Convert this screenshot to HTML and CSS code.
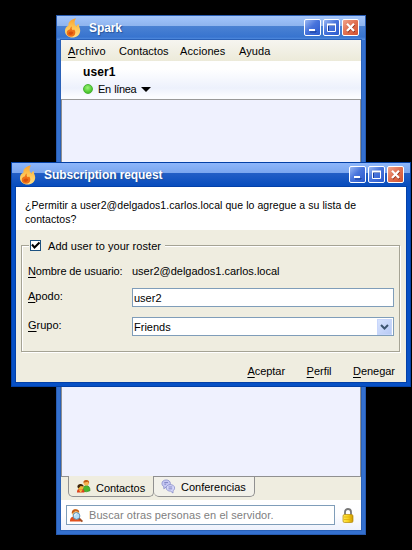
FILE: index.html
```html
<!DOCTYPE html>
<html lang="es">
<head>
<meta charset="utf-8">
<title>Spark</title>
<link rel="stylesheet" href="styles.css">
</head>
<body>
<svg width="0" height="0" class="defs">
  <defs>
    <linearGradient id="fl" x1="0" y1="0" x2="0" y2="1"><stop offset="0" stop-color="#f9a030"/><stop offset=".4" stop-color="#fdc04e"/><stop offset="1" stop-color="#ffe184"/></linearGradient>
    <linearGradient id="gold" x1="0" x2="1"><stop offset="0" stop-color="#ffe95a"/><stop offset=".5" stop-color="#f7d21c"/><stop offset="1" stop-color="#c99500"/></linearGradient>
    <symbol id="flame" viewBox="0 0 16 20">
      <path d="M11.500.3C6 1.500 3.300 4.500 4 7.500C1.500 8.700.5 10.700.5 13C.5 17 4 19.500 8 19.500S15.700 17 15.700 12.500C15.700 10 14 8.500 14.300 6C12.800 6.500 12 7.500 11.800 8.500C9.500 6.500 9.500 3.500 11.500.3Z" fill="url(#fl)"/>
      <path d="M7.500 8.500C6 9.200 5.500 10 5.700 11.300C3.500 11.800 2.200 13 2.200 15C2.200 17.500 4.200 18.700 6.500 18.700S10.800 17.300 10.800 14.700C10.800 13 10.300 12 9.500 11.500L8.400 12.300C7 11.200 6.800 9.800 7.500 8.500Z" fill="#ee7018"/>
      <path d="M3.800 15.500C4.500 13.300 7 12.800 8.800 14.500C8 17.200 5 17.700 3.800 15.500Z" fill="#d9500c"/>
    </symbol>
    <symbol id="min" viewBox="0 0 17 17"><path d="M6 13h6v-1" stroke="#173a94" fill="none"/><path d="M5 11h6" stroke="#fff" stroke-width="2"/></symbol>
    <symbol id="max" viewBox="0 0 17 17"><path d="M5.500 6.500h7v6h-7z" fill="none" stroke="#173a94"/><path d="M4.500 5.500h8v7h-8z" fill="none" stroke="#fff"/><path d="M4 5.500h9" stroke="#fff" stroke-width="2"/></symbol>
    <symbol id="close" viewBox="0 0 17 17"><path d="M5.500 5.500l7 7.500M12.500 5.500l-7 7.500" stroke="#8d2f1b" stroke-width="2"/><path d="M5 4.700l7 7.300M12 4.700l-7 7.300" stroke="#fff" stroke-width="2.200"/></symbol>
  </defs>
</svg>

<main class="window spark">
  <header class="titlebar">
    <svg class="flame"><use href="#flame"/></svg>
    <h1 class="title">Spark</h1>
    <button class="wbtn"><svg><use href="#min"/></svg></button>
    <button class="wbtn"><svg><use href="#max"/></svg></button>
    <button class="wbtn wclose"><svg><use href="#close"/></svg></button>
  </header>
  <div class="content">
    <nav class="menu"><span class="m1"><u>A</u>rchivo</span><span class="m2">Contactos</span><span class="m3">Acciones</span><span class="m4">Ayuda</span></nav>
    <section class="profile">
      <div class="name">user1</div>
      <div class="status"><i class="dot"></i><span>En línea</span><svg class="arrow" viewBox="0 0 10 5"><path d="M0 0h10L5 5z"/></svg></div>
    </section>
    <section class="list"></section>
    <div class="tabs">
      <div class="tab active">
        <svg class="ticon" viewBox="0 0 16 16">
          <path d="M7.500 13C7 9.500 8.500 7 11 7s4 2 4 5.500q-4 2-7.500.5Z" fill="#48b52c" stroke="#2c821b" stroke-width=".6"/>
          <circle cx="11" cy="4" r="3" fill="#f6b653"/><path d="M8 4C7.500 0 14.500 0 14 4.500L12.500 3Z" fill="#c05a14"/>
          <path d="M1 14.500C1 11.500 2 10.500 5 10.500S9 12 9 14.500Z" fill="#dc421c"/>
          <circle cx="5" cy="8.500" r="3" fill="#efb737"/><path d="M1.500 8.500C1 4.500 8 4 8.300 8L5 7.500 2.500 10Z" fill="#3d260b"/><path d="M3 12l2 2 2-2" fill="#f9d447"/>
        </svg><span>Contactos</span>
      </div>
      <div class="tab">
        <svg class="ticon" viewBox="0 0 16 16">
          <path d="M5.500 1C8 1 10 2.500 10 4.800S8 8.500 5.500 8.500L3 10.500V8C1.500 7.300 1 6 1 4.800 1 2.500 3 1 5.500 1Z" fill="#c6c8f2" stroke="#8287c8" stroke-width=".8"/>
          <path d="M10 6c2.500 0 4.500 1.400 4.500 3.500 0 1.500-.7 2.400-1.700 3V15l-2.500-2C7.500 13 5.500 11.500 5.500 9.500S7.500 6 10 6Z" fill="#d6d8fa" stroke="#8287c8" stroke-width=".8"/>
          <path d="M3.500 3.800h4M3.500 5.500h2M8 8.500h4M8 10.500h4" stroke="#7479bd" stroke-width=".9"/>
        </svg><span>Conferencias</span>
      </div>
    </div>
    <div class="search">
      <div class="sfield">
        <svg class="sicon" viewBox="0 0 16 16">
          <path d="M1 14.500C1 10 3 9 6.500 9s6 1.500 6 5.500Z" fill="#e2501e"/>
          <circle cx="7" cy="5" r="3.800" fill="#f8bd68"/><path d="M3 6C2 0 11 0 11 4.500L7 3Z" fill="#c35a18"/>
          <path d="M10.500 11l3.800 3.500" stroke="#a34c22" stroke-width="2"/>
          <circle cx="8" cy="8.500" r="3.600" fill="#b5e0fa" stroke="#5887ad" stroke-width="1"/><path d="M6 8a2 2 0 0 1 2-2" stroke="#fff" fill="none"/>
        </svg><span>Buscar otras personas en el servidor.</span>
      </div>
      <svg class="lock" viewBox="0 0 12 15"><path d="M3 7V4c0-4 6-4 6 0v3" fill="none" stroke="#777" stroke-width="1.800"/><rect x="1" y="6.500" width="10" height="8" rx="1.500" fill="url(#gold)" stroke="#b58a08" stroke-width=".7"/><path d="M2 9h8M2 11.500h8" stroke="#e2ae0c" stroke-width=".8"/></svg>
    </div>
  </div>
</main>

<section class="window dialog">
  <header class="titlebar">
    <svg class="flame"><use href="#flame"/></svg>
    <h2 class="title">Subscription request</h2>
    <button class="wbtn"><svg><use href="#min"/></svg></button>
    <button class="wbtn"><svg><use href="#max"/></svg></button>
    <button class="wbtn wclose"><svg><use href="#close"/></svg></button>
  </header>
  <div class="content">
    <p class="prompt">¿Permitir a user2@delgados1.carlos.local que lo agregue a su lista de<br>contactos?</p>
    <fieldset class="group">
      <legend><span class="check"><svg viewBox="0 0 9 9"><path d="M1 3.500L3.500 6.500 8.500 1.500" fill="none" stroke="#000" stroke-width="2"/></svg></span><span class="ltext">Add user to your roster</span></legend>
      <div class="form">
        <label class="user"><u>N</u>ombre de usuario:</label><div class="jid">user2@delgados1.carlos.local</div>
        <label><u>A</u>podo:</label><div class="field">user2</div>
        <label><u>G</u>rupo:</label><div class="field"><span>Friends</span><span class="drop"><svg viewBox="0 0 9 6"><path d="M1 1l3.500 3.500L8 1" fill="none" stroke="#3d5570" stroke-width="2"/></svg></span></div>
      </div>
    </fieldset>
    <div class="actions"><span><u>A</u>ceptar</span><span><u>P</u>erfil</span><span><u>D</u>enegar</span></div>
  </div>
</section>
</body>
</html>
```
FILE: styles.css
```css
* { box-sizing: border-box; }
body { margin: 0; width: 412px; height: 550px; background: #000; position: relative; overflow: hidden; font: 11px/13px "Liberation Sans", sans-serif; color: #000; }
svg { display: block; }
.defs { position: absolute; }
u { text-underline-offset: 2px; text-decoration-thickness: 1px; text-decoration-skip-ink: none; }

.window { position: absolute; display: flex; flex-direction: column; padding: 0 5px 5px; }
.spark { left: 56px; top: 15px; width: 310px; height: 520px; background: #3470cf; box-shadow: inset 0 0 0 1px #285bb0; }
.dialog { left: 11px; top: 162px; width: 400px; height: 225px; background: #0750c5; box-shadow: inset 0 0 0 1px #0340a6; }
.content { flex: 1; display: flex; flex-direction: column; min-height: 0; }
.spark .content { box-shadow: 0 0 0 1px #2a61b8; }
.dialog .content { background: #efede0; box-shadow: 0 0 0 1px #0340a8; }

.titlebar { height: 25px; flex: none; margin: 0 -5px; padding: 3px 6px 0 7px; display: flex; align-items: flex-start; gap: 2px; border: solid #285bb0; border-width: 1px 1px 0; background: linear-gradient(#a3c5fb 0, #8eb4ee 10px, #4b82d3 10px, #3874cf 21px, #5a94e4 100%); }
.dialog .titlebar { border-color: #0340a6; background: linear-gradient(#8db6fb 0, #7ba6ee 10px, #235fc6 10px, #0c4fbe 21px, #064dbf 100%); }
.flame { width: 17px; height: 20px; margin-top: -1px; }
.title { flex: 1; margin: 2px 0 0 6px; font-size: 12px; line-height: 14px; font-weight: bold; letter-spacing: -.08px; color: #fff; text-shadow: 1px 1px 1px #29539a; }
.wbtn { width: 17px; height: 17px; padding: 0; border: 1px solid #fff; border-radius: 2px; background: linear-gradient(135deg, #9ab8f2, #4874dc 45%, #2b5acd); }
.wbtn svg { width: 17px; height: 17px; margin: -1px; }
.wclose { background: linear-gradient(135deg, #f1a58d, #e27354 45%, #d3522f); }

.menu { height: 21px; flex: none; display: flex; align-items: flex-start; padding: 5px 0 0 7px; background: linear-gradient(#f6f5f0, #ecead9); }
.m1 { width: 51px; letter-spacing: .15px; }
.m2 { width: 61px; }
.m3 { width: 59px; letter-spacing: .1px; }
.m4 { letter-spacing: .1px; }
.profile { height: 38px; flex: none; padding: 4px 0 0 22px; background: linear-gradient(#fff 0, #fff 8px, #edf1fc 27px, #fbfcff 36px); }
.name { font-size: 12px; line-height: 14px; font-weight: bold; letter-spacing: .1px; }
.status { display: flex; align-items: center; margin-top: 3px; height: 14px; }
.status span { margin-left: 5px; letter-spacing: -.4px; word-spacing: 1px; width: 38px; white-space: nowrap; }
.dot { width: 10px; height: 10px; border-radius: 50%; background: radial-gradient(circle at 45% 35%, #9cf378, #53cd35 60%, #38a925); border: 1px solid #49b335; }
.arrow { width: 10px; height: 5px; margin-left: 5px; }
.list { flex: 1; background: #eff1fe; border: 1px solid #909090; border-top-color: #999; }
.tabs { height: 23px; flex: none; display: flex; padding-left: 7px; background: #efede0; }
.tab { height: 20px; width: 101px; padding-left: 7px; border: solid #909090; border-width: 0 1px 1px 0; border-radius: 0 0 5px 5px; display: flex; align-items: center; background: #f2f1ea; }
.tab span { margin-top: 1px; }
.tab.active { width: 86px; height: 21px; margin-top: -1px; border-left-width: 1px; background: #efede0; }
.ticon { width: 15px; height: 15px; margin-right: 5px; flex: none; }
.tab.active .ticon { margin-top: 1px; }
.tab.active span { margin-top: 4px; letter-spacing: -.05px; }
.search { height: 30px; flex: none; display: flex; align-items: center; padding-left: 5px; background: linear-gradient(#fff, #fdfdff 50%, #edf1fc); }
.sfield { width: 269px; height: 20px; border: 1px solid #7f9db9; background: #fff; display: flex; align-items: center; color: #808080; padding-left: 2px; letter-spacing: .08px; }
.sicon { width: 15px; height: 15px; margin-right: 5px; }
.lock { width: 12px; height: 15px; margin-left: 7px; }

.prompt { margin: 0; height: 43px; flex: none; background: #fff; padding: 11px 0 0 9px; font-size: 10.5px; line-height: 14px; letter-spacing: .06px; white-space: nowrap; }
.group { height: 114px; margin: 8px 6px 0 5px; padding: 0; border: 1px solid #a5a394; box-shadow: 1px 1px 0 #fff, inset 1px 1px 0 #fff; min-width: 0; }
legend { display: flex; align-items: center; height: 15px; margin-left: 7px; padding: 2px 4px 0 1px; background: #efede0; }
.check { width: 11px; height: 11px; margin-top: -2px; border: 1px solid #1c5180; background: #fff; }
.check svg { width: 9px; height: 9px; }
.ltext { margin-left: 7px; letter-spacing: .05px; }
.form { display: grid; grid-template-columns: 104px 262px; grid-template-rows: 13px 19px 19px; row-gap: 10px; padding: 12px 0 0 6px; }
.form label { padding-top: 2px; white-space: nowrap; }
.form label.user { padding-top: 0; letter-spacing: -.12px; }
.field { height: 19px; border: 1px solid #7f9db9; background: #fff; display: flex; align-items: center; padding: 2px 1px 0 1px; }
.drop { width: 15px; height: 16px; margin: -2px 0 0 auto; background: linear-gradient(135deg, #d7e3fe, #b8caf5); display: flex; align-items: center; justify-content: center; border: 1px solid #c8d6fb; }
.drop svg { width: 9px; height: 6px; }
.actions { display: flex; justify-content: flex-end; gap: 21.5px; margin: 13px 11px 0 0; letter-spacing: -.03px; }
```
